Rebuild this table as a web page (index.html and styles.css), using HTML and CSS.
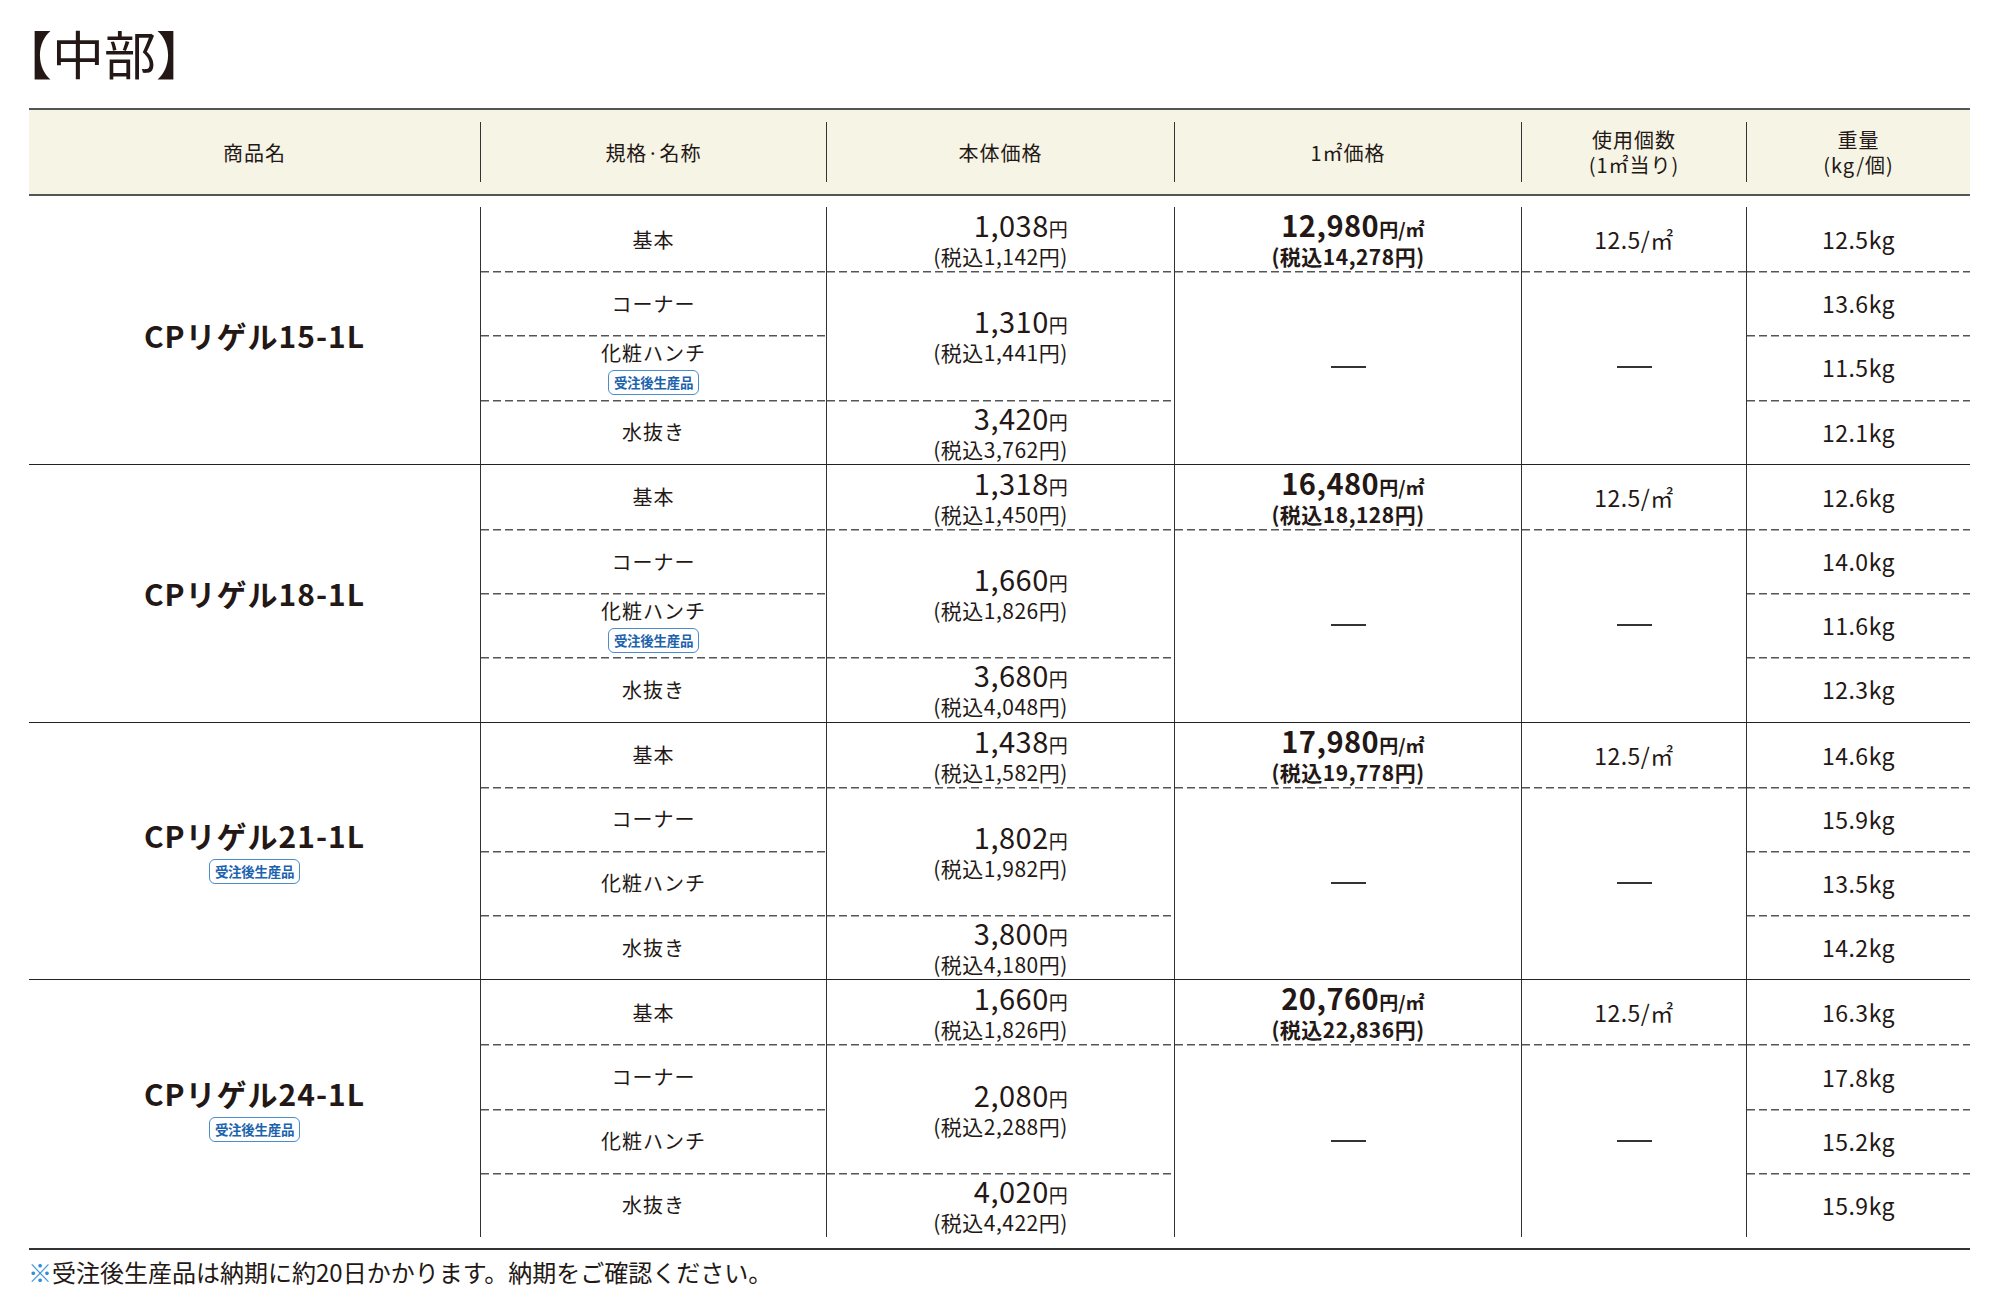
FILE: index.html
```html
<!DOCTYPE html>
<html lang="ja">
<head>
<meta charset="utf-8">
<title>中部 価格表</title>
<link rel="stylesheet" href="styles.css">
</head>
<body>
<h1 class="title">【中部】</h1>
<div class="table">
  <div class="thead">
    <div class="th">商品名</div>
    <div class="th">規格·名称</div>
    <div class="th">本体価格</div>
    <div class="th">1㎡価格</div>
    <div class="th two">使用個数<br>(1㎡当り)</div>
    <div class="th two">重量<br>(kg/個)</div>
  </div>
  <div class="tbody">
    <!-- group 1 -->
    <div class="group">
      <div class="cell c1 rall"><div class="name">CPリゲル15-1L</div></div>
      <div class="cell c2 r1 v">基本</div>
      <div class="cell c2 r2 v d">コーナー</div>
      <div class="cell c2 r3 v d"><div class="stack"><span>化粧ハンチ</span><span class="badge">受注後生産品</span></div></div>
      <div class="cell c2 r4 v d">水抜き</div>
      <div class="cell c3 r1 v"><div class="pb"><div class="pm">1,038<small>円</small></div><div class="pt">(税込1,142円)</div></div></div>
      <div class="cell c3 r23 v d"><div class="pb"><div class="pm">1,310<small>円</small></div><div class="pt">(税込1,441円)</div></div></div>
      <div class="cell c3 r4 v d"><div class="pb"><div class="pm">3,420<small>円</small></div><div class="pt">(税込3,762円)</div></div></div>
      <div class="cell c4 r1 v"><div class="pb bold"><div class="pm">12,980<small>円/㎡</small></div><div class="pt">(税込14,278円)</div></div></div>
      <div class="cell c4 r24 v d"><span class="dash"></span></div>
      <div class="cell c5 r1 v num">12.5/㎡</div>
      <div class="cell c5 r24 v d"><span class="dash"></span></div>
      <div class="cell c6 r1 v num">12.5kg</div>
      <div class="cell c6 r2 v d num">13.6kg</div>
      <div class="cell c6 r3 v d num">11.5kg</div>
      <div class="cell c6 r4 v d num">12.1kg</div>
    </div>
    <!-- group 2 -->
    <div class="group">
      <div class="cell c1 rall"><div class="name">CPリゲル18-1L</div></div>
      <div class="cell c2 r1 v">基本</div>
      <div class="cell c2 r2 v d">コーナー</div>
      <div class="cell c2 r3 v d"><div class="stack"><span>化粧ハンチ</span><span class="badge">受注後生産品</span></div></div>
      <div class="cell c2 r4 v d">水抜き</div>
      <div class="cell c3 r1 v"><div class="pb"><div class="pm">1,318<small>円</small></div><div class="pt">(税込1,450円)</div></div></div>
      <div class="cell c3 r23 v d"><div class="pb"><div class="pm">1,660<small>円</small></div><div class="pt">(税込1,826円)</div></div></div>
      <div class="cell c3 r4 v d"><div class="pb"><div class="pm">3,680<small>円</small></div><div class="pt">(税込4,048円)</div></div></div>
      <div class="cell c4 r1 v"><div class="pb bold"><div class="pm">16,480<small>円/㎡</small></div><div class="pt">(税込18,128円)</div></div></div>
      <div class="cell c4 r24 v d"><span class="dash"></span></div>
      <div class="cell c5 r1 v num">12.5/㎡</div>
      <div class="cell c5 r24 v d"><span class="dash"></span></div>
      <div class="cell c6 r1 v num">12.6kg</div>
      <div class="cell c6 r2 v d num">14.0kg</div>
      <div class="cell c6 r3 v d num">11.6kg</div>
      <div class="cell c6 r4 v d num">12.3kg</div>
    </div>
    <!-- group 3 -->
    <div class="group">
      <div class="cell c1 rall"><div class="stack big"><span class="name">CPリゲル21-1L</span><span class="badge">受注後生産品</span></div></div>
      <div class="cell c2 r1 v">基本</div>
      <div class="cell c2 r2 v d">コーナー</div>
      <div class="cell c2 r3 v d">化粧ハンチ</div>
      <div class="cell c2 r4 v d">水抜き</div>
      <div class="cell c3 r1 v"><div class="pb"><div class="pm">1,438<small>円</small></div><div class="pt">(税込1,582円)</div></div></div>
      <div class="cell c3 r23 v d"><div class="pb"><div class="pm">1,802<small>円</small></div><div class="pt">(税込1,982円)</div></div></div>
      <div class="cell c3 r4 v d"><div class="pb"><div class="pm">3,800<small>円</small></div><div class="pt">(税込4,180円)</div></div></div>
      <div class="cell c4 r1 v"><div class="pb bold"><div class="pm">17,980<small>円/㎡</small></div><div class="pt">(税込19,778円)</div></div></div>
      <div class="cell c4 r24 v d"><span class="dash"></span></div>
      <div class="cell c5 r1 v num">12.5/㎡</div>
      <div class="cell c5 r24 v d"><span class="dash"></span></div>
      <div class="cell c6 r1 v num">14.6kg</div>
      <div class="cell c6 r2 v d num">15.9kg</div>
      <div class="cell c6 r3 v d num">13.5kg</div>
      <div class="cell c6 r4 v d num">14.2kg</div>
    </div>
    <!-- group 4 -->
    <div class="group last">
      <div class="cell c1 rall"><div class="stack big"><span class="name">CPリゲル24-1L</span><span class="badge">受注後生産品</span></div></div>
      <div class="cell c2 r1 v">基本</div>
      <div class="cell c2 r2 v d">コーナー</div>
      <div class="cell c2 r3 v d">化粧ハンチ</div>
      <div class="cell c2 r4 v d">水抜き</div>
      <div class="cell c3 r1 v"><div class="pb"><div class="pm">1,660<small>円</small></div><div class="pt">(税込1,826円)</div></div></div>
      <div class="cell c3 r23 v d"><div class="pb"><div class="pm">2,080<small>円</small></div><div class="pt">(税込2,288円)</div></div></div>
      <div class="cell c3 r4 v d"><div class="pb"><div class="pm">4,020<small>円</small></div><div class="pt">(税込4,422円)</div></div></div>
      <div class="cell c4 r1 v"><div class="pb bold"><div class="pm">20,760<small>円/㎡</small></div><div class="pt">(税込22,836円)</div></div></div>
      <div class="cell c4 r24 v d"><span class="dash"></span></div>
      <div class="cell c5 r1 v num">12.5/㎡</div>
      <div class="cell c5 r24 v d"><span class="dash"></span></div>
      <div class="cell c6 r1 v num">16.3kg</div>
      <div class="cell c6 r2 v d num">17.8kg</div>
      <div class="cell c6 r3 v d num">15.2kg</div>
      <div class="cell c6 r4 v d num">15.9kg</div>
    </div>
  </div>
</div>
<p class="note"><span class="mark">※</span>受注後生産品は納期に約20日かかります。納期をご確認ください。</p>
</body>
</html>
```

FILE: styles.css
```css
* { box-sizing: border-box; }
html, body { background: #fff; }
body {
  margin: 0;
  font-family: "Noto Sans CJK JP", "Noto Sans", sans-serif;
  font-weight: 400;
  color: #231815;
}
.title {
  margin: 0;
  padding: 21px 0 0 0;
  font-size: 52px;
  font-weight: 400;
  line-height: 64px;
  height: 108px;
}
.table {
  margin: 0 30px 0 29px;
  width: 1941px;
}
.thead {
  display: grid;
  grid-template-columns: 451px 346px 348px 347px 225px 224px;
  background: #f6f4e5;
  border-top: 2px solid #555;
  border-bottom: 2px solid #555;
  padding: 12px 0;
}
.th {
  height: 60px;
  display: flex;
  align-items: center;
  justify-content: center;
  text-align: center;
  font-size: 20px;
  letter-spacing: 1px;
  line-height: 25px;
}
.th + .th { border-left: 1.5px solid #333; }
.tbody {
  padding: 11px 0 11px;
  border-bottom: 2px solid #333;
}
.group {
  display: grid;
  grid-template-columns: 451px 346px 348px 347px 225px 224px;
  grid-template-rows: repeat(4, 64.2px);
  border-bottom: 1.5px solid #222;
}
.group.last { border-bottom: none; }
.cell {
  display: flex;
  align-items: center;
  justify-content: center;
  text-align: center;
  font-size: 20px;
  letter-spacing: 1px;
}
.c1 { grid-column: 1; }
.c2 { grid-column: 2; }
.c3 { grid-column: 3; }
.c4 { grid-column: 4; }
.c5 { grid-column: 5; }
.c6 { grid-column: 6; }
.rall { grid-row: 1 / 5; }
.r1 { grid-row: 1; }
.r2 { grid-row: 2; }
.r3 { grid-row: 3; }
.r4 { grid-row: 4; }
.r23 { grid-row: 2 / 4; }
.r24 { grid-row: 2 / 5; }
.v { border-left: 1.5px solid #333; }
.d {
  background-image: repeating-linear-gradient(90deg, #555 0 8px, transparent 8px 12px);
  background-size: 100% 1.5px;
  background-repeat: no-repeat;
  background-position: left top;
}
.name {
  font-size: 30px;
  font-weight: 700;
  letter-spacing: 1px;
  line-height: 36px;
}
.stack {
  display: flex;
  flex-direction: column;
  align-items: center;
  gap: 4px;
  line-height: 26px;
}
.stack.big { gap: 6px; }
.badge {
  display: inline-block;
  border: 1.5px solid #4a8ccc;
  border-radius: 6px;
  color: #1b63ad;
  background: #fff;
  font-size: 13.5px;
  font-weight: 700;
  letter-spacing: -0.3px;
  line-height: 23px;
  padding: 0 5px;
}
.pb {
  display: inline-block;
  text-align: right;
  letter-spacing: 0.5px;
}
.pm {
  font-size: 29px;
  line-height: 31px;
}
.pm small { font-size: 19px; letter-spacing: 0; }
.pt {
  font-size: 21px;
  line-height: 25px;
}
.bold { font-weight: 700; }
.bold .pm { font-size: 29px; }
.num { font-size: 23px; letter-spacing: 0.5px; }
.dash {
  display: block;
  width: 35px;
  height: 2px;
  background: #333;
}
.note {
  margin: 7px 0 0 28px;
  font-size: 24px;
  line-height: 30px;
}
.mark { color: #2f8fd6; }
```
